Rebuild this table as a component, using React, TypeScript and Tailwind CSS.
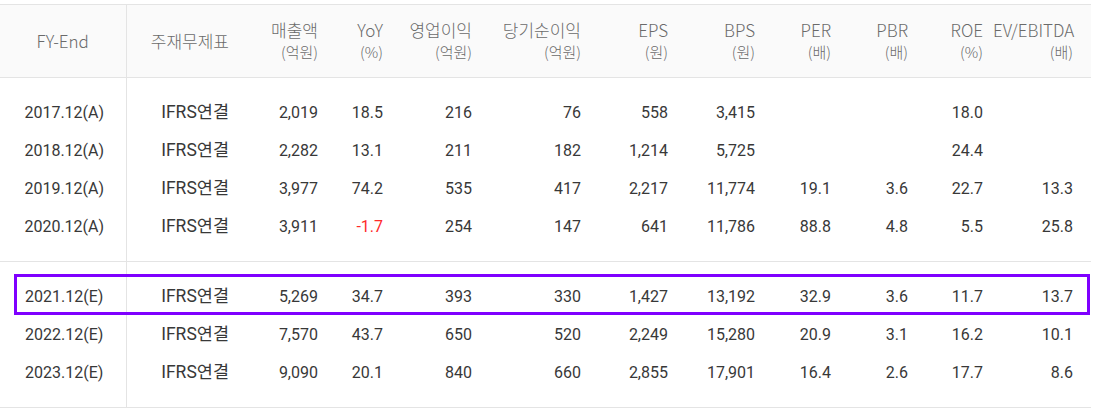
import React from 'react';

type Row = {
  period: string;
  values: string[];
};

const columns: { label: string; unit?: string; width: string }[] = [
  { label: 'FY-End', width: 'w-[126px]' },
  { label: '주재무제표', width: 'w-[113px]' },
  { label: '매출액', unit: '(억원)', width: 'w-[89px]' },
  { label: 'YoY', unit: '(%)', width: 'w-[65px]' },
  { label: '영업이익', unit: '(억원)', width: 'w-[89px]' },
  { label: '당기순이익', unit: '(억원)', width: 'w-[109px]' },
  { label: 'EPS', unit: '(원)', width: 'w-[87px]' },
  { label: 'BPS', unit: '(원)', width: 'w-[87px]' },
  { label: 'PER', unit: '(배)', width: 'w-[76px]' },
  { label: 'PBR', unit: '(배)', width: 'w-[77px]' },
  { label: 'ROE', unit: '(%)', width: 'w-[75px]' },
  { label: 'EV/EBITDA', unit: '(배)', width: 'w-[98px]' },
];

const actual: Row[] = [
  { period: '2017.12(A)', values: ['2,019', '18.5', '216', '76', '558', '3,415', '', '', '18.0', ''] },
  { period: '2018.12(A)', values: ['2,282', '13.1', '211', '182', '1,214', '5,725', '', '', '24.4', ''] },
  { period: '2019.12(A)', values: ['3,977', '74.2', '535', '417', '2,217', '11,774', '19.1', '3.6', '22.7', '13.3'] },
  { period: '2020.12(A)', values: ['3,911', '-1.7', '254', '147', '641', '11,786', '88.8', '4.8', '5.5', '25.8'] },
];

const estimate: Row[] = [
  { period: '2021.12(E)', values: ['5,269', '34.7', '393', '330', '1,427', '13,192', '32.9', '3.6', '11.7', '13.7'] },
  { period: '2022.12(E)', values: ['7,570', '43.7', '650', '520', '2,249', '15,280', '20.9', '3.1', '16.2', '10.1'] },
  { period: '2023.12(E)', values: ['9,090', '20.1', '840', '660', '2,855', '17,901', '16.4', '2.6', '17.7', '8.6'] },
];

function Spacer({ last }: { last?: boolean }) {
  return (
    <tr className={last ? 'h-4 border-b border-[#e4e4e4]' : 'h-4'}>
      <td className="border-r border-[#e4e4e4]" />
      <td colSpan={11} />
    </tr>
  );
}

function DataRow({ row, highlight }: { row: Row; highlight?: boolean }) {
  return (
    <tr className="h-[38px]">
      <td className="relative border-r border-[#e4e4e4] text-center">
        {highlight && (
          <div className="pointer-events-none absolute left-[14px] top-[-4px] z-10 h-[41px] w-[1076px] border-[3px] border-[#7f00ff]" />
        )}
        <span className="pl-[3px]">{row.period}</span>
      </td>
      <td className="pr-[10px] text-right text-[17.5px]">IFRS연결</td>
      {row.values.map((v, i) => (
        <td
          key={i}
          className={
            (i === row.values.length - 1 ? 'pr-[18px] ' : 'pr-[10px] ') +
            (v.startsWith('-') ? 'text-right text-[#ff2a2a]' : 'text-right')
          }
        >
          {v}
        </td>
      ))}
    </tr>
  );
}

export default function App() {
  return (
    <div className="bg-white pt-[4px]">
      <table
        className="w-[1091px] table-fixed border-collapse text-[16px] text-[#383838]"
        style={{ fontFamily: 'Roboto, "Noto Sans CJK KR", sans-serif' }}
      >
        <colgroup>
          {columns.map((c) => (
            <col key={c.label} className={c.width} />
          ))}
        </colgroup>
        <thead>
          <tr
            className="h-[73px] border-y border-[#e4e4e4] bg-[#fafafa] text-[17px] text-[#6a6a6a] font-light"
            style={{ fontFamily: '"Noto Sans CJK KR", sans-serif' }}
          >
            {columns.map((c, i) => (
              <th
                key={c.label}
                className={
                  i === 0
                    ? 'border-r border-[#e4e4e4] text-center font-light'
                    : i === columns.length - 1
                      ? 'pr-[18px] text-right font-light'
                      : 'pr-[10px] text-right font-light'
                }
              >
                <div className="leading-[22px]">{c.label}</div>
                {c.unit && <div className="text-[15px] leading-[22px]">{c.unit}</div>}
              </th>
            ))}
          </tr>
        </thead>
        <tbody>
          <Spacer />
          {actual.map((r) => (
            <DataRow key={r.period} row={r} />
          ))}
          <Spacer last />
          <Spacer />
          {estimate.map((r, i) => (
            <DataRow key={r.period} row={r} highlight={i === 0} />
          ))}
          <Spacer last />
        </tbody>
      </table>
    </div>
  );
}
